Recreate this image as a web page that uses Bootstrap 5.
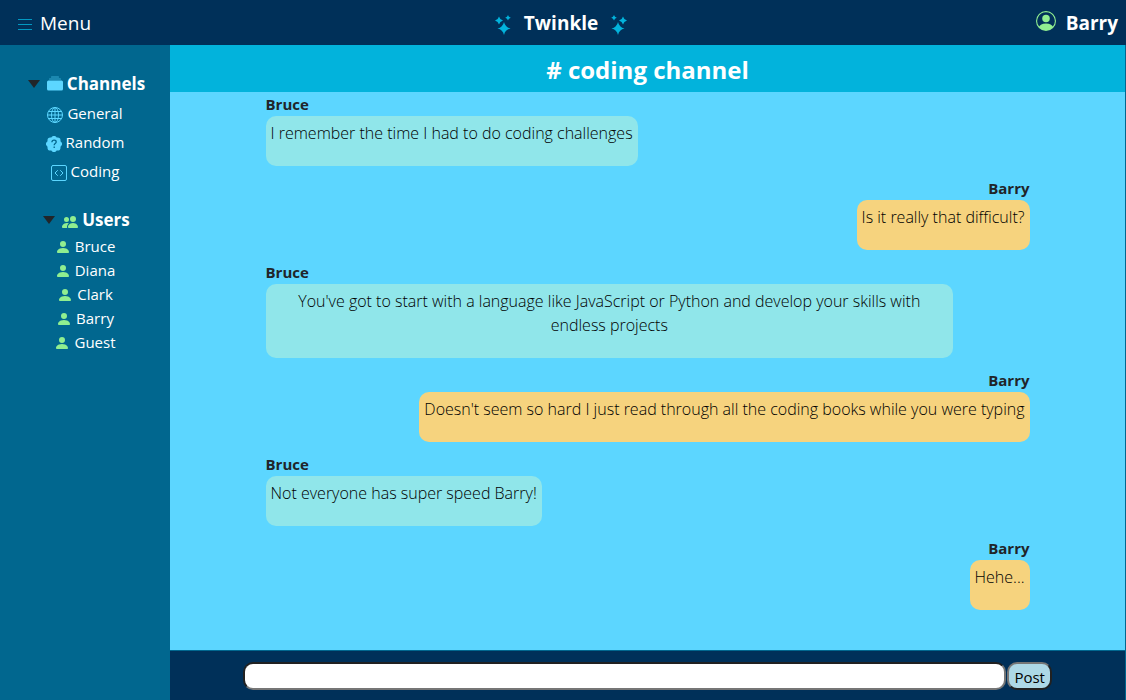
<!DOCTYPE html>
<html lang="en">
<head>
<meta charset="utf-8">
<meta name="viewport" content="width=device-width, initial-scale=1">
<title>Twinkle</title>
<link href="https://cdn.jsdelivr.net/npm/bootstrap@5.3.0/dist/css/bootstrap.min.css" rel="stylesheet">
<style>
:root { --navy: #003059; --teal: #01678f; --cyan: #02b3dc; --sky: #5cd6ff; --leaf: #90ee90; }
body { font-family: "Open Sans", "Noto Sans", sans-serif; font-size: 15px; line-height: 24px; background: var(--sky); }
svg { fill: currentColor; flex: none; }
a, summary { color: #fff; text-decoration: none; }
summary { list-style: none; cursor: pointer; }
summary::-webkit-details-marker { display: none; }
.topbar { background: var(--navy); height: 45px; font-size: 19px; color: #fff; }
.topbar .side { flex: 1 1 0; }
.brand { gap: 13px; padding-left: 4px; }
.user { gap: 10px; }
.menu-btn { color: #fff; font-size: 19px; line-height: 24px; }
.c-cyan { color: var(--cyan); }
.c-sky { color: var(--sky); }
.c-leaf { color: var(--leaf); }
.sidebar { background: var(--teal); width: 15.1%; padding-top: 24px; }
.sidebar a svg { margin-top: 2px; }
.group-title { font-size: 17px; font-weight: 700; line-height: 28px; padding-left: 3px; }
.channels .group-title { line-height: 30px; }
.group-title .caret { color: #212529; margin-right: 7px; }
.channels a { line-height: 29px; }
.main-col { border-right: 1px solid var(--teal); }
.channel-title { background: var(--cyan); font-size: 24px; font-weight: 700; line-height: 45px; padding-top: 2px; }
.chat { width: 80%; }
.author { font-weight: 700; font-size: 15px; }
.bubble { border-radius: 10px; padding: 5px 5px 21px; margin-bottom: 10px; max-width: 90%; color: #000; text-align: center; font-size: 16px; font-weight: 300; }
.theirs { background: #90e6ea; }
.mine { background: #f6d37e; }
.post-bar { background: var(--navy); height: 50px; border-top: 1px solid var(--teal); }
.post-bar form { width: 84.7%; gap: 1px; }
.post-bar input { border: 2px inset #767676; border-radius: 10px; height: 28px; min-width: 0; }
.post-bar button { border: 2px outset #767676; border-radius: 10px; height: 28px; background: #add8e6; color: #000; padding: 2px 5px 0; line-height: 22px; }
</style>
</head>
<body>
<svg class="d-none" xmlns="http://www.w3.org/2000/svg">
  <symbol id="i-person" viewBox="0 0 16 16"><path d="M3 14s-1 0-1-1 1-4 6-4 6 3 6 4-1 1-1 1H3Zm5-6a3 3 0 1 0 0-6 3 3 0 0 0 0 6Z"/></symbol>
  <symbol id="i-people" viewBox="0 0 16 16"><path d="M7 14s-1 0-1-1 1-4 5-4 5 3 5 4-1 1-1 1H7Zm4-6a3 3 0 1 0 0-6 3 3 0 0 0 0 6Zm-5.784 6A2.238 2.238 0 0 1 5 13c0-1.355.68-2.75 1.936-3.72A6.325 6.325 0 0 0 5 9c-4 0-5 3-5 4s1 1 1 1h4.216ZM4.500 8a2.500 2.500 0 1 0 0-5 2.500 2.500 0 0 0 0 5Z"/></symbol>
  <symbol id="i-caret" viewBox="0 0 12 8"><path d="M0 0h12L6 8Z"/></symbol>
  <symbol id="i-stars" viewBox="0 0 16 20"><path d="M9 7Q10.200 12.300 15.500 13.500 10.200 14.700 9 20 7.800 14.700 2.500 13.500 7.800 12.300 9 7ZM4 1.500Q4.800 4.700 8 5.500 4.800 6.300 4 9.500 3.200 6.300 0 5.500 3.200 4.700 4 1.500ZM13 0Q13.600 2.200 15.800 2.800 13.600 3.400 13 5.600 12.400 3.400 10.200 2.800 12.400 2.200 13 0Z"/></symbol>
</svg>

<div class="d-flex flex-column min-vh-100">
  <nav class="topbar d-flex align-items-center">
    <div class="side">
      <button type="button" class="menu-btn btn border-0 p-0 ms-3 d-flex align-items-center gap-2">
        <svg class="c-cyan mt-1" width="16" height="14" viewBox="0 0 16 14"><path opacity=".8" d="M2 1h14v1H2zM2 6h14v1H2zM2 11h14v1H2z"/></svg>
        Menu
      </button>
    </div>
    <div class="brand fw-bold d-flex align-items-center">
      <svg class="c-cyan mt-1" width="16" height="20"><use href="#i-stars"/></svg>
      Twinkle
      <svg class="c-cyan mt-1" width="16" height="20" viewBox="0 0 16 20"><g transform="matrix(-1 0 0 1 16 0)"><use href="#i-stars" width="16" height="20"/></g></svg>
    </div>
    <div class="side user fw-bold d-flex align-items-center justify-content-end pe-2">
      <svg class="c-leaf mb-1" width="20" height="20" viewBox="0 0 16 16"><path d="M11 6a3 3 0 1 1-6 0 3 3 0 0 1 6 0Z"/><path fill-rule="evenodd" d="M0 8a8 8 0 1 1 16 0A8 8 0 0 1 0 8Zm8-7a7 7 0 0 0-5.468 11.370C3.242 11.226 4.805 10 8 10s4.757 1.225 5.468 2.370A7 7 0 0 0 8 1Z"/></svg>
      Barry
    </div>
  </nav>

  <div class="d-flex flex-grow-1">
    <aside class="sidebar flex-shrink-0">
      <details class="channels mb-3 pb-1" open>
        <summary class="group-title d-flex justify-content-center align-items-center">
          <svg class="caret" width="12" height="8"><use href="#i-caret"/></svg>
          <svg class="c-sky me-1" width="16" height="16" viewBox="0 0 16 16"><path d="M0 13a1.500 1.500 0 0 0 1.500 1.500h13A1.500 1.500 0 0 0 16 13V6a1.500 1.500 0 0 0-1.500-1.500h-13A1.500 1.500 0 0 0 0 6v7Z"/><path opacity=".6" d="M2 3a.5.5 0 0 0 .5.5h11a.5.5 0 0 0 0-1h-11A.5.5 0 0 0 2 3Zm2-2a.5.5 0 0 0 .5.5h7a.5.5 0 0 0 0-1h-7A.5.5 0 0 0 4 1Z"/></svg>
          Channels
        </summary>
        <a href="#general" class="d-flex justify-content-center align-items-center">
          <svg class="c-sky me-1" width="16" height="16" viewBox="0 0 16 16"><g fill="none" stroke="currentColor"><circle cx="8" cy="8" r="7.500"/><ellipse cx="8" cy="8" rx="3.500" ry="7.500"/><path d="M8 .5v15M.5 8h15M2 4.500h12M2 11.500h12"/></g></svg>
          General
        </a>
        <a href="#random" class="d-flex justify-content-center align-items-center">
          <svg class="c-sky me-1" width="16" height="16" viewBox="0 0 16 16"><path d="M5.933.87a2.890 2.890 0 0 1 4.134 0l.622.638.890-.011a2.890 2.890 0 0 1 2.924 2.924l-.010.890.636.622a2.890 2.890 0 0 1 0 4.134l-.637.622.011.890a2.890 2.890 0 0 1-2.924 2.924l-.890-.010-.622.636a2.890 2.890 0 0 1-4.134 0l-.622-.637-.890.011a2.890 2.890 0 0 1-2.924-2.924l.010-.890-.636-.622a2.890 2.890 0 0 1 0-4.134l.637-.622-.011-.890a2.890 2.890 0 0 1 2.924-2.924l.890.010Z"/><path d="M5.900 6.200C6 4.800 6.900 4.200 8.100 4.200c1.200 0 2.100.7 2.100 1.800 0 1.600-2 1.500-2 3.200M8.200 10.600v1.500" fill="none" stroke="#01678f" stroke-width="1.300"/></svg>
          Random
        </a>
        <a href="#coding" class="d-flex justify-content-center align-items-center">
          <svg class="c-sky me-1" width="16" height="16" viewBox="0 0 16 16"><g fill="none" stroke="currentColor" stroke-linecap="round" stroke-linejoin="round"><rect x=".5" y=".5" width="15" height="15" rx="1.500"/><path d="M6.500 5.500 4 8l2.500 2.500M9.500 5.500 12 8l-2.500 2.500"/></g></svg>
          Coding
        </a>
      </details>
      <details open>
        <summary class="group-title d-flex justify-content-center align-items-center">
          <svg class="caret" width="12" height="8"><use href="#i-caret"/></svg>
          <svg class="c-leaf me-1 mt-1" width="16" height="16"><use href="#i-people"/></svg>
          Users
        </summary>
        <a href="#bruce" class="d-flex justify-content-center align-items-center gap-1"><svg class="c-leaf" width="16" height="16"><use href="#i-person"/></svg>Bruce</a>
        <a href="#diana" class="d-flex justify-content-center align-items-center gap-1"><svg class="c-leaf" width="16" height="16"><use href="#i-person"/></svg>Diana</a>
        <a href="#clark" class="d-flex justify-content-center align-items-center gap-1"><svg class="c-leaf" width="16" height="16"><use href="#i-person"/></svg>Clark</a>
        <a href="#barry" class="d-flex justify-content-center align-items-center gap-1"><svg class="c-leaf" width="16" height="16"><use href="#i-person"/></svg>Barry</a>
        <a href="#guest" class="d-flex justify-content-center align-items-center gap-1"><svg class="c-leaf" width="16" height="16"><use href="#i-person"/></svg>Guest</a>
      </details>
    </aside>

    <main class="main-col flex-grow-1 d-flex flex-column">
      <h1 class="channel-title text-white text-center m-0"># coding channel</h1>
      <div class="chat mx-auto flex-grow-1 d-flex flex-column">
        <div class="author align-self-start">Bruce</div>
        <p class="bubble theirs align-self-start">I remember the time I had to do coding challenges</p>
        <div class="author align-self-end">Barry</div>
        <p class="bubble mine align-self-end">Is it really that difficult?</p>
        <div class="author align-self-start">Bruce</div>
        <p class="bubble theirs align-self-start">You've got to start with a language like JavaScript or Python and develop your skills with endless projects</p>
        <div class="author align-self-end">Barry</div>
        <p class="bubble mine align-self-end">Doesn't seem so hard I just read through all the coding books while you were typing</p>
        <div class="author align-self-start">Bruce</div>
        <p class="bubble theirs align-self-start">Not everyone has super speed Barry!</p>
        <div class="author align-self-end">Barry</div>
        <p class="bubble mine align-self-end">Hehe...</p>
      </div>
      <footer class="post-bar d-flex align-items-center justify-content-center">
        <form class="d-flex">
          <input type="text" class="flex-grow-1" aria-label="Message">
          <button type="button">Post</button>
        </form>
      </footer>
    </main>
  </div>
</div>
<script src="https://cdn.jsdelivr.net/npm/bootstrap@5.3.0/dist/js/bootstrap.bundle.min.js"></script>
</body>
</html>
